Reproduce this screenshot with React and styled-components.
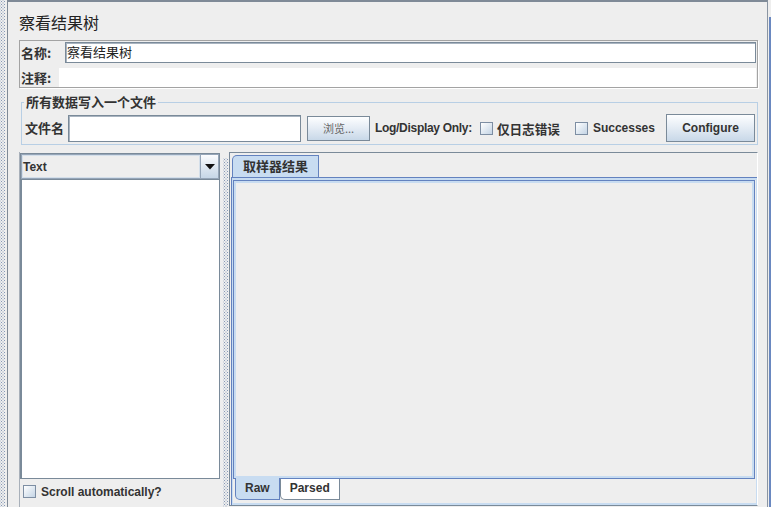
import styled, { createGlobalStyle } from 'styled-components';

const cjk = `"Noto Sans CJK SC", "Liberation Sans", sans-serif`;
const latin = `"Liberation Sans", "Noto Sans CJK SC", sans-serif`;

const GlobalStyle = createGlobalStyle`
  html, body { margin: 0; padding: 0; }
  body { background: #eeeeee; color: #333333; font-family: ${latin}; }
`;

const Frame = styled.div`
  display: flex;
  width: 771px;
  height: 507px;
  overflow: hidden;
  background: #eeeeee;
`;

const Bumps = styled.div`
  width: ${p => p.$w}px;
  margin: ${p => p.$m || 0};
  background-image:
    radial-gradient(circle, #8598b6 0.55px, transparent 0.85px),
    radial-gradient(circle, #8598b6 0.55px, transparent 0.85px);
  background-size: 3px 3px;
  background-position: 0 0, 1.5px 1.5px;
`;

const LeftStrip = styled.div`
  width: 7px;
  flex-shrink: 0;
  display: flex;
`;

const RightStrip = styled.div`
  width: 3px;
  flex-shrink: 0;
  background: linear-gradient(#6a88c0, #6a88c0) no-repeat 1px 17px / 2px 100%;
`;

const Main = styled.div`
  width: 761px;
  box-sizing: border-box;
  flex-shrink: 0;
  border-left: 1px solid #7f8a97;
  border-top: 2px solid #7f8a97;
  border-right: 1px solid #8a95a2;
  padding-left: 11px;
  display: flex;
  flex-direction: column;
`;

const Title = styled.div`
  margin-top: 10px;
  height: 20px;
  line-height: 20px;
  font-family: ${cjk};
  font-size: 16px;
  color: #222;
`;

const NamePanel = styled.div`
  margin-top: 8px;
  width: 739px;
  box-sizing: border-box;
  border: 1px solid #a3a3a3;
  box-shadow: 1px 1px 0 #ffffff;
  padding: 1px 0 0 0;
  display: flex;
  flex-direction: column;
`;

const NameRow = styled.div`
  display: flex;
  height: ${p => p.$h}px;
  margin-top: ${p => p.$mt || 0}px;
`;

const Label = styled.div`
  width: ${p => p.$w}px;
  flex-shrink: 0;
  padding-left: 1px;
  box-sizing: border-box;
  font-family: ${cjk};
  font-weight: 700;
  font-size: 13px;
  line-height: ${p => p.$lh || 20}px;
  color: #333;
  white-space: nowrap;
`;

const TextField = styled.div`
  flex: ${p => (p.$w ? '0 0 auto' : '1')};
  width: ${p => (p.$w ? `${p.$w}px` : 'auto')};
  height: ${p => p.$h}px;
  box-sizing: border-box;
  margin-right: ${p => p.$mr || 0}px;
  background: #ffffff;
  border: ${p => (p.$plain ? 'none' : '1px solid #7a8a99')};
  box-shadow: ${p => (p.$plain ? 'none' : 'inset 1px 1px 0 #a9b4c0')};
  padding-left: 1px;
  font-family: ${cjk};
  font-size: 13px;
  line-height: ${p => p.$h - 3}px;
  color: #222;
`;

const Group = styled.fieldset`
  margin: 7px 0 0 2px;
  width: 737px;
  box-sizing: border-box;
  border: 1px solid #b8cfe5;
  padding: 5px 2px 2px 2px;
  min-width: 0;
`;

const Legend = styled.legend`
  padding: 0 2px;
  margin-left: 0;
  font-family: ${cjk};
  font-weight: 700;
  font-size: 13px;
  line-height: 14px;
  color: #333;
`;

const FileRow = styled.div`
  display: flex;
  align-items: center;
  height: 28px;
`;

const Button = styled.div`
  width: ${p => p.$w}px;
  height: ${p => p.$h}px;
  margin-left: ${p => p.$ml || '0px'};
  flex-shrink: 0;
  box-sizing: border-box;
  border: 1px solid #7a8a99;
  background: linear-gradient(#fdfeff, #e6edf5 45%, #c8d8e8);
  display: flex;
  align-items: center;
  justify-content: center;
  font-family: ${p => (p.$cjk ? cjk : latin)};
  font-weight: ${p => (p.$cjk ? 400 : 700)};
  font-size: ${p => (p.$cjk ? 11 : 12)}px;
  color: ${p => (p.$cjk ? '#666' : '#333')};
`;

const Text = styled.span`
  margin-left: ${p => p.$ml || 0}px;
  font-family: ${p => (p.$cjk ? cjk : latin)};
  font-weight: 700;
  font-size: ${p => (p.$cjk ? 12.6 : 12)}px;
  letter-spacing: ${p => p.$ls || 0}px;
  color: #333;
  white-space: nowrap;
`;

const Check = styled.span`
  width: 13px;
  height: 13px;
  flex-shrink: 0;
  box-sizing: border-box;
  margin-left: ${p => p.$ml || 0}px;
  border: 1px solid #7d8ea3;
  background: linear-gradient(135deg, #ffffff, #dbe5ef 60%, #c4d4e5);
`;

const Split = styled.div`
  margin-top: 7px;
  flex: 1;
  display: flex;
  min-height: 0;
`;

const LeftPane = styled.div`
  width: 201px;
  flex-shrink: 0;
  box-sizing: border-box;
  border-left: 1px solid #a8b0ba;
  display: flex;
  flex-direction: column;
`;

const Combo = styled.div`
  height: 27px;
  margin-top: 1px;
  box-sizing: border-box;
  border: 1px solid #7a8a99;
  box-shadow: inset 0 0 0 1px #95a5b8;
  display: flex;
  padding: 1px;
`;

const ComboValue = styled.div`
  flex: 1;
  box-sizing: border-box;
  border: 1px solid #d4dfea;
  background: #eeeeee;
  padding-left: 0;
  font-family: ${latin};
  font-weight: 700;
  font-size: 12px;
  line-height: 22px;
  color: #333;
`;

const ComboArrow = styled.div`
  width: 18px;
  box-sizing: border-box;
  border-left: 1px solid #95a5b8;
  background: linear-gradient(#fbfcfe, #dce6f0 55%, #c6d6e7);
  display: flex;
  align-items: center;
  justify-content: center;
`;

const List = styled.div`
  flex: 1;
  background: #ffffff;
  border: 1px solid #7a8a99;
  border-top: none;
  border-left: 2px solid #7a8a99;
`;

const CheckRow = styled.div`
  height: 28px;
  flex-shrink: 0;
  display: flex;
  align-items: flex-start;
  padding: 6px 0 0 3px;
  box-sizing: border-box;
`;

const Divider = styled.div`
  width: 9px;
  flex-shrink: 0;
  display: flex;
`;

const RightPane = styled.div`
  width: 529px;
  flex-shrink: 0;
  box-sizing: border-box;
  margin-bottom: 1px;
  border-left: 1px solid #7a8a99;
  border-top: 1px solid #7a8a99;
  border-right: 1px solid #ffffff;
  border-bottom: 1px solid #7a8a99;
  display: flex;
  flex-direction: column;
`;

const TabStrip = styled.div`
  height: 24px;
  flex-shrink: 0;
  display: flex;
  align-items: ${p => (p.$bottom ? 'flex-start' : 'flex-end')};
  padding-left: ${p => p.$pl}px;
`;

const Tab = styled.div`
  height: ${p => p.$h}px;
  box-sizing: border-box;
  padding: 0 ${p => p.$px}px;
  background: ${p => (p.$active ? '#c8dcf1' : '#ffffff')};
  border: 1px solid ${p => (p.$active ? '#6382bf' : '#7a8a99')};
  ${p => (p.$bottom ? 'border-top: none;' : 'border-bottom: none;')}
  ${p => (p.$bottom ? 'border-bottom-left-radius: 5px;' : 'border-top-left-radius: 5px;')}
  margin-top: ${p => (p.$bottom && p.$active ? -1 : 0)}px;
  font-family: ${p => (p.$cjk ? cjk : latin)};
  font-weight: 700;
  font-size: ${p => (p.$cjk ? 13 : 12)}px;
  line-height: ${p => p.$h - 2}px;
  color: #333;
`;

const OuterContent = styled.div`
  flex: 1;
  display: flex;
  margin-left: 1px;
  border-top: 1px solid #6382bf;
  border-left: 1px solid #6382bf;
  background: #c8dcf1;
  padding: 2px 1px 2px 1px;
  min-height: 0;
`;

const InnerTabs = styled.div`
  flex: 1;
  display: flex;
  flex-direction: column;
  background: #eeeeee;
  padding-right: 1px;
`;

const InnerContent = styled.div`
  flex: 1;
  display: flex;
  border: 1px solid #6382bf;
  background: #c8dcf1;
  padding: 2px;
`;

const Area = styled.div`
  flex: 1;
  background: #eeeeee;
`;

export default function App() {
  return (
    <Frame>
      <GlobalStyle />
      <LeftStrip>
        <Bumps $w={5} />
      </LeftStrip>
      <Main>
        <Title>察看结果树</Title>
        <NamePanel>
          <NameRow $h={21}>
            <Label $w={45} $lh={21}>名称:</Label>
            <TextField $h={21} $mr={1}>察看结果树</TextField>
          </NameRow>
          <NameRow $h={19} $mt={5}>
            <Label $w={39} $lh={19}>注释:</Label>
            <TextField $h={19} $mr={1} $plain />
          </NameRow>
        </NamePanel>
        <Group>
          <Legend>所有数据写入一个文件</Legend>
          <FileRow>
            <Label $w={44} $lh={28}>文件名</Label>
            <TextField $w={233} $h={27} />
            <Button $w={63} $h={25} $ml="6px" $cjk>浏览...</Button>
            <Text $ml={5} $ls={-0.3}>Log/Display Only:</Text>
            <Check $ml={8} />
            <Text $ml={4} $cjk>仅日志错误</Text>
            <Check $ml={15} />
            <Text $ml={5}>Successes</Text>
            <Button $w={89} $h={28} $ml="auto">Configure</Button>
          </FileRow>
        </Group>
        <Split>
          <LeftPane>
            <Combo>
              <ComboValue>Text</ComboValue>
              <ComboArrow>
                <svg width="10" height="6" viewBox="0 0 10 6">
                  <polygon points="0,0 10,0 5,5.5" fill="#111" />
                </svg>
              </ComboArrow>
            </Combo>
            <List />
            <CheckRow>
              <Check />
              <Text $ml={5}>Scroll automatically?</Text>
            </CheckRow>
          </LeftPane>
          <Divider>
            <Bumps $w={5} $m="6px 0 0 3px" />
          </Divider>
          <RightPane>
            <TabStrip $pl={2}>
              <Tab $active $cjk $h={22} $px={10}>取样器结果</Tab>
            </TabStrip>
            <OuterContent>
              <InnerTabs>
                <InnerContent>
                  <Area />
                </InnerContent>
                <TabStrip $bottom $pl={2}>
                  <Tab $active $bottom $h={22} $px={9}>Raw</Tab>
                  <Tab $bottom $h={21} $px={9}>Parsed</Tab>
                </TabStrip>
              </InnerTabs>
            </OuterContent>
          </RightPane>
        </Split>
      </Main>
      <RightStrip />
    </Frame>
  );
}
